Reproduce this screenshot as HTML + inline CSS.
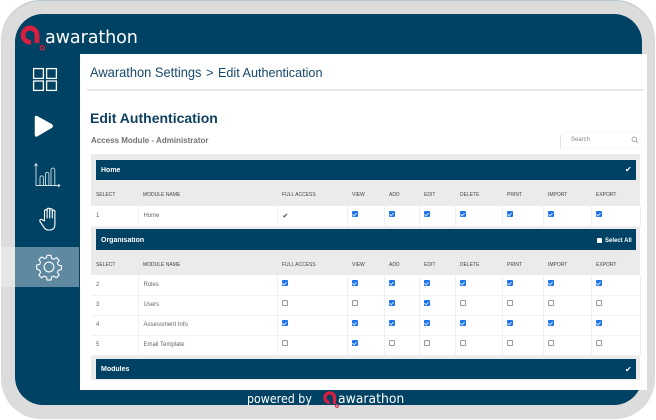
<!DOCTYPE html>
<html><head><meta charset="utf-8">
<style>
html,body{margin:0;padding:0;background:#fff}
#p{position:relative;width:656px;height:420px;overflow:hidden;background:#fff;font-family:"Liberation Sans",sans-serif}
#p div,#p svg,#p table{position:absolute}
.outer{left:1px;top:0;width:654px;height:419px;border-radius:40px;background:#dcdcdc;box-shadow:inset 0 1px 0 #b9c6cf}
.inner{left:15px;top:14px;width:627px;height:391px;border-radius:28px;background:#004263}
.gs{left:1px;top:247px;width:14px;height:40px;background:#e6e6e6}
.gh{left:15px;top:247px;width:64px;height:40px;background:#5f88a1}
.panel{left:80px;top:54px;width:567px;height:336px;background:#fff}
.g{left:91px;top:154px;width:549px;height:226px;background:#ebebeb}
.bar{left:96px;width:540px;background:#004263;color:#fff;font-weight:bold;font-size:7px;text-indent:5px;overflow:hidden}
.bar span{position:relative;top:1px;filter:blur(.25px);display:block}
table{left:91px;width:549px;table-layout:fixed;border-collapse:collapse;font-size:5px;color:#555;filter:blur(.2px)}
td{padding:0 0 0 5px;overflow:hidden;white-space:nowrap;box-sizing:border-box}
tr.h td{height:25px;font-size:5px;color:#444;padding-top:4px}
tr.r td{height:20px;background:#fff;border-right:1px solid #f0f0f0;border-bottom:1px solid #f2f2f2;font-size:6px;color:#666}
i{display:block;width:6px;height:6px;border-radius:1px;box-sizing:border-box;position:relative;top:-2px;left:-1px}
i.y{background:#1a73e8}
i.y:after{content:"";position:absolute;left:1.600px;top:.8px;width:2px;height:3px;border:solid #cfe2fb;border-width:0 1px 1px 0;transform:rotate(40deg)}
i.n{border:1px solid #9a9a9a;background:#fff}
</style></head><body>
<div id="p">
<div class="outer"></div>
<div class="inner"></div>
<div class="gs"></div>
<div class="gh"></div>
<div class="panel"></div>

<svg style="left:0;top:0" width="150" height="54" viewBox="0 0 150 54" fill="none">
<path d="M31 42A7 7 0 1 1 37 35V43" stroke="#d81f3f" stroke-width="4.800"/>
<circle cx="42.300" cy="47.700" r="2" stroke="#d81f3f" stroke-width="1.400"/>
</svg>
<div style="left:45px;top:27px;font:18px 'DejaVu Sans',sans-serif;color:#fff;letter-spacing:-.1px;white-space:nowrap;transform-origin:0 0;transform:scaleX(.975)">awarathon</div>

<svg style="left:30px;top:64px" width="30" height="30" viewBox="0 0 30 30" fill="none" stroke="#fff" stroke-width="1.300">
<rect x="3.600" y="4.600" width="9.800" height="9.800"/><rect x="16.600" y="4.600" width="9.800" height="9.800"/>
<rect x="3.600" y="17" width="9.800" height="9.400"/><rect x="16.600" y="17" width="9.800" height="9.400"/>
</svg>
<svg style="left:29px;top:112px" width="28" height="28" viewBox="0 0 28 28">
<path d="M6.500 5.500Q6.500 4 8 4.800L22.500 12.800Q24 14 22.500 15.200L8 23.700Q6.500 24.500 6.500 23Z" fill="#fff" stroke="#fff" stroke-width="1.500" stroke-linejoin="round"/>
</svg>
<svg style="left:30px;top:159px" width="34" height="32" viewBox="0 0 34 32" fill="none" stroke="#cfdde6" stroke-width=".9">
<path d="M6 5V26.500H29.500M4.600 7 6 4.500 7.400 7M28 25 30 26.500 28 28"/>
<path d="M10 26V18.500a1.500 1.500 0 0 1 3.400 0V26M15.500 26V15a1.700 1.700 0 0 1 3.400 0V26M21 26V11a1.900 1.900 0 0 1 3.800 0V26"/>
</svg>
<svg style="left:36px;top:204px" width="26" height="30" viewBox="0 0 26 30" fill="none" stroke="#fff" stroke-width="1.100" stroke-linecap="round" stroke-linejoin="round">
<path d="M8.500 17V7a1.300 1.300 0 0 1 2.600 0V5.500a1.300 1.300 0 0 1 2.600 0V6a1.300 1.300 0 0 1 2.600 0V7.500a1.300 1.300 0 0 1 2.600 0V20q0 6-5.500 6H12.500q-2.500 0-4-2L4 17.500q-.6-1.500.6-2 1.200-.5 2 .5Z"/>
<path d="M11.100 6V14M13.700 5.500V14M16.300 6V14"/>
</svg>
<svg style="left:35px;top:253px" width="28" height="28" viewBox="0 0 24 24" fill="none" stroke="#fff" stroke-width=".95" stroke-linejoin="round">
<circle cx="12" cy="12" r="4.200"/>
<path d="M10.300 2h3.400l.5 2.600 1.900.8 2.200-1.500 2.400 2.400-1.500 2.200.8 1.900 2.600.5v3.400l-2.600.5-.8 1.900 1.500 2.200-2.400 2.400-2.200-1.500-1.900.8-.5 2.600h-3.400l-.5-2.600-1.900-.8-2.200 1.500-2.400-2.400 1.500-2.200-.8-1.900L1.400 13.700v-3.400l2.600-.5.800-1.900-1.500-2.200 2.400-2.400 2.200 1.500 1.900-.8Z"/>
</svg>

<div style="left:90px;top:64px;font-size:14px;line-height:17px;color:#17496a;white-space:nowrap;transform-origin:0 0;transform:scaleX(.92)">Awarathon Settings</div>
<div style="left:206px;top:64px;font-size:13px;line-height:17px;color:#17496a">&gt;</div>
<div style="left:218px;top:64px;font-size:13px;line-height:17px;color:#17496a;white-space:nowrap;transform-origin:0 0;transform:scaleX(.97)">Edit Authentication</div>
<div style="left:87px;top:89px;width:557px;height:2px;background:#e8e8e8"></div>

<div style="left:90px;top:109px;font-size:14px;font-weight:bold;line-height:18px;color:#0d3f5f;white-space:nowrap">Edit Authentication</div>
<div style="left:91px;top:135px;font-size:8px;font-weight:bold;line-height:12px;color:#737373;white-space:nowrap;filter:blur(.25px)">Access Module - Administrator</div>

<div style="left:560px;top:135px;width:1px;height:14px;background:#e4e4e4"></div>
<div style="left:564px;top:132px;width:76px;height:16px;background:#fff;box-shadow:0 0 2px #eee"></div>
<div style="left:571px;top:136px;font-size:6px;line-height:8px;color:#888">Search</div>
<svg style="left:631px;top:136px" width="8" height="8" viewBox="0 0 8 8" fill="none" stroke="#999" stroke-width=".8"><circle cx="3.300" cy="3.300" r="2.300"/><path d="M5 5 7 7"/></svg>

<div class="g"></div>

<div class="bar" style="top:160px;height:20px;line-height:20px"><span>Home</span></div>
<div style="left:625px;top:165px;font-size:8px;line-height:10px;color:#fff">✔</div>
<table style="top:180px">
<colgroup><col style="width:47px"><col style="width:139px"><col style="width:70px"><col style="width:37px"><col style="width:35px"><col style="width:36px"><col style="width:47px"><col style="width:41px"><col style="width:48px"><col style="width:49px"></colgroup>
<tr class="h" style="height:26px"><td>SELECT</td><td>MODULE NAME</td><td>FULL ACCESS</td><td>VIEW</td><td>ADD</td><td>EDIT</td><td>DELETE</td><td>PRINT</td><td>IMPORT</td><td>EXPORT</td></tr>
<tr class="r"><td>1</td><td>Home</td><td style="font-size:7px;color:#444">✔</td><td><i class="y"></i></td><td><i class="y"></i></td><td><i class="y"></i></td><td><i class="y"></i></td><td><i class="y"></i></td><td><i class="y"></i></td><td><i class="y"></i></td></tr>
</table>

<div class="bar" style="top:229px;height:21px;line-height:21px"><span>Organisation</span></div>
<div style="left:597px;top:238px;width:5px;height:5px;background:#fff;border-radius:1px"></div>
<div style="left:605px;top:237px;font-size:6px;font-weight:bold;line-height:9px;color:#fff;white-space:nowrap">Select All</div>
<table style="top:250px">
<colgroup><col style="width:47px"><col style="width:139px"><col style="width:70px"><col style="width:37px"><col style="width:35px"><col style="width:36px"><col style="width:47px"><col style="width:41px"><col style="width:48px"><col style="width:49px"></colgroup>
<tr class="h"><td>SELECT</td><td>MODULE NAME</td><td>FULL ACCESS</td><td>VIEW</td><td>ADD</td><td>EDIT</td><td>DELETE</td><td>PRINT</td><td>IMPORT</td><td>EXPORT</td></tr>
<tr class="r"><td>2</td><td>Roles</td><td><i class="y"></i></td><td><i class="y"></i></td><td><i class="y"></i></td><td><i class="y"></i></td><td><i class="y"></i></td><td><i class="y"></i></td><td><i class="y"></i></td><td><i class="y"></i></td></tr>
<tr class="r"><td>3</td><td>Users</td><td><i class="n"></i></td><td><i class="n"></i></td><td><i class="y"></i></td><td><i class="y"></i></td><td><i class="n"></i></td><td><i class="n"></i></td><td><i class="n"></i></td><td><i class="n"></i></td></tr>
<tr class="r"><td>4</td><td>Assessment Info</td><td><i class="y"></i></td><td><i class="y"></i></td><td><i class="y"></i></td><td><i class="y"></i></td><td><i class="y"></i></td><td><i class="y"></i></td><td><i class="y"></i></td><td><i class="y"></i></td></tr>
<tr class="r"><td>5</td><td>Email Template</td><td><i class="n"></i></td><td><i class="y"></i></td><td><i class="n"></i></td><td><i class="n"></i></td><td><i class="n"></i></td><td><i class="n"></i></td><td><i class="n"></i></td><td><i class="n"></i></td></tr>
</table>

<div class="bar" style="top:359px;height:20px;line-height:20px"><span>Modules</span></div>
<div style="left:625px;top:365px;font-size:8px;line-height:10px;color:#fff">✔</div>

<div style="left:247px;top:391px;font:12.500px/16px 'DejaVu Sans',sans-serif;color:#fff;white-space:nowrap;transform-origin:0 0;transform:scaleX(.885)">powered by</div>
<svg style="left:321px;top:388px" width="22" height="22" viewBox="0 0 22 22" fill="none">
<path d="M8.500 14.500A4.800 4.800 0 1 1 13.500 10V16" stroke="#d81f3f" stroke-width="3.300"/>
<circle cx="16" cy="18" r="1.400" stroke="#d81f3f" stroke-width="1"/>
</svg>
<div style="left:338px;top:392px;font:13px/16px 'DejaVu Sans',sans-serif;color:#fff;white-space:nowrap;transform-origin:0 0;transform:scaleX(.955)">awarathon</div>
</div>
</body></html>
